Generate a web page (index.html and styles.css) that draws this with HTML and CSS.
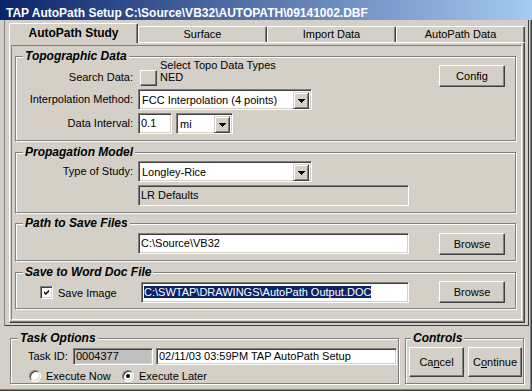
FILE: index.html
```html
<!DOCTYPE html>
<html>
<head>
<meta charset="utf-8">
<link rel="stylesheet" href="styles.css">
</head>
<body>
<div class="window">
  <div class="titlebar">TAP AutoPath Setup C:\Source\VB32\AUTOPATH\09141002.DBF</div>
  <div class="client">
    <div class="frame">
      <div class="tabs">
        <div class="tab active">AutoPath Study</div>
        <div class="tab">Surface</div>
        <div class="tab">Import Data</div>
        <div class="tab">AutoPath Data</div>
      </div>
      <div class="panel">
        <div class="inner">
          <div class="group g1">
            <span class="legend">Topographic Data</span>
            <div class="row row-search">
              <span class="lbl lbl-search">Search Data:</span>
              <span class="sqbtn"></span>
              <div class="topo"><span class="topo-title">Select Topo Data Types</span><span class="topo-ned">NED</span></div>
              <div class="btn btn-side btn-config">Config</div>
            </div>
            <div class="row row-next">
              <span class="lbl">Interpolation Method:</span>
              <div class="combo w-interp"><span class="val">FCC Interpolation (4 points)</span><span class="drop"><svg width="7" height="4" viewBox="0 0 7 4"><path d="M0 0h7v1h-1v1h-1v1h-1v1h-1v-1h-1v-1h-1v-1h-1z"/></svg></span></div>
            </div>
            <div class="row row-next">
              <span class="lbl">Data Interval:</span>
              <div class="edit w-interval">0.1</div>
              <div class="combo w-unit"><span class="val">mi</span><span class="drop"><svg width="7" height="4" viewBox="0 0 7 4"><path d="M0 0h7v1h-1v1h-1v1h-1v1h-1v-1h-1v-1h-1v-1h-1z"/></svg></span></div>
            </div>
          </div>

          <div class="group g2">
            <span class="legend">Propagation Model</span>
            <div class="row">
              <span class="lbl">Type of Study:</span>
              <div class="combo w-interp"><span class="val">Longley-Rice</span><span class="drop"><svg width="7" height="4" viewBox="0 0 7 4"><path d="M0 0h7v1h-1v1h-1v1h-1v1h-1v-1h-1v-1h-1v-1h-1z"/></svg></span></div>
            </div>
            <div class="edit readonly w-path lr">LR Defaults</div>
          </div>

          <div class="group g3">
            <span class="legend">Path to Save Files</span>
            <div class="row">
              <div class="edit w-path indent">C:\Source\VB32</div>
              <div class="btn btn-side btn-browse">Browse</div>
            </div>
          </div>

          <div class="group g4">
            <span class="legend">Save to Word Doc File</span>
            <div class="row">
              <div class="checkwrap">
                <span class="checkbox"><svg width="7" height="7" viewBox="0 0 7 7"><path d="M6 0h1v1h-1zM5 1h2v1h-2zM0 2h1v1h-1zM4 2h3v1h-3zM0 3h2v1h-2zM3 3h3v1h-3zM0 4h5v1h-5zM1 5h3v1h-3zM2 6h1v1h-1z"/></svg></span>
                <span class="checklabel">Save Image</span>
              </div>
              <div class="edit w-doc"><span class="sel">C:\SWTAP\DRAWINGS\AutoPath Output.DOC</span></div>
              <div class="btn btn-side btn-browse2">Browse</div>
            </div>
          </div>
        </div>
      </div>
    </div>

    <div class="bottom">
      <div class="group g-task">
        <span class="legend">Task Options</span>
        <div class="row">
          <span class="tasklbl">Task ID:</span>
          <div class="edit field readonly-id w-taskid">0004377</div>
          <div class="edit field w-taskname">02/11/03 03:59PM TAP AutoPath Setup</div>
        </div>
        <div class="row radios">
          <span class="opt opt-now"><span class="radio"></span>Execute Now</span>
          <span class="opt"><span class="radio on"></span>Execute Later</span>
        </div>
      </div>
      <div class="group g-controls">
        <span class="legend legend-controls">Controls</span>
        <div class="row">
          <div class="btn big btn-cancel">Ca<u>n</u>cel</div>
          <div class="btn big btn-continue">C<u>o</u>ntinue</div>
        </div>
      </div>
    </div>
  </div>
</div>
</body>
</html>
```

FILE: styles.css
```css
* { box-sizing: border-box; }
html, body { margin: 0; padding: 0; }
body {
  background: #d4d0c8;
  font-family: "Liberation Sans", Arial, sans-serif;
  font-size: 11px;
  color: #000;
}
.window { width: 532px; height: 391px; overflow: hidden; }

.titlebar {
  height: 20px;
  padding: 6px 0 0 6px;
  line-height: 14px;
  background: linear-gradient(to right, #0a246a, #a6caf0);
  color: #fff;
  font-weight: bold;
  font-size: 12px;
  white-space: nowrap;
}

.client {
  height: 371px;
  border-right: 1px solid #404040;
  border-bottom: 1px solid #404040;
  box-shadow: inset -1px -1px 0 #808080;
}

.frame {
  margin: 0 2px 0 4px;
  height: 306px;
  padding: 3px 0 0 4px;
  border-left: 1px solid #808080;
  border-right: 1px solid #404040;
  border-bottom: 1px solid #404040;
}

.tabs {
  display: flex;
  align-items: flex-end;
  height: 19px;
  width: 516px;
}
.tab {
  width: 129px;
  height: 16px;
  border-top: 1px solid #fff;
  border-left: 1px solid #fff;
  border-right: 1px solid #404040;
  border-radius: 2px 2px 0 0;
  box-shadow: inset -1px 0 0 #808080;
  text-align: center;
  line-height: 15px;
  background: #d4d0c8;
}
.tab.active {
  position: relative;
  z-index: 1;
  height: 20px;
  margin-bottom: -1px;
  font-weight: bold;
  font-size: 12px;
  line-height: 18px;
}

.panel {
  width: 516px;
  height: 281px;
  padding: 2px 2px 2px 1px;
  border-top: 1px solid #fff;
  border-left: 1px solid #fff;
  border-right: 1px solid #404040;
  border-bottom: 1px solid #404040;
  box-shadow: inset -1px -1px 0 #808080;
}
.inner {
  height: 100%;
  padding: 0 0 0 3px;
  border: 1px solid;
  border-color: #808080 #fff #fff #808080;
  overflow: hidden;
}

.group {
  position: relative;
  border: 1px solid #808080;
  box-shadow: 1px 1px 0 #fff, inset 1px 1px 0 #fff;
}
.inner .group { width: 501px; }
.legend {
  position: absolute;
  top: -8px;
  left: 7px;
  padding: 0 2px;
  background: #d4d0c8;
  font-weight: bold;
  font-style: italic;
  font-size: 12px;
  line-height: 14px;
  white-space: nowrap;
}
.legend-controls { left: 5px; }

.g1 { height: 85px; margin-top: 10px; padding-top: 2px; }
.g2 { height: 61px; margin-top: 11px; padding-top: 8px; }
.g3 { height: 38px; margin-top: 10px; padding-top: 9px; }
.g4 { height: 37px; margin-top: 11px; padding-top: 9px; }

.row { display: flex; align-items: flex-start; }
.row-search { height: 27px; }
.row-next { margin-top: 3px; }

.lbl {
  flex: none;
  width: 117px;
  margin-right: 5px;
  text-align: right;
  line-height: 21px;
  white-space: nowrap;
}
.lbl-search { line-height: 13px; margin-top: 12px; margin-right: 7px; }

.sqbtn {
  flex: none;
  width: 17px;
  height: 16px;
  margin-top: 11px;
  border: 1px solid;
  border-color: #fff #404040 #404040 #fff;
  box-shadow: inset -1px -1px 0 #808080;
}
.topo { display: flex; flex-direction: column; margin-left: 3px; white-space: nowrap; }
.topo-title { line-height: 12px; }
.topo-ned { line-height: 13px; }

.btn {
  flex: none;
  display: flex;
  align-items: center;
  justify-content: center;
  border: 1px solid;
  border-color: #fff #404040 #404040 #fff;
  box-shadow: inset -1px -1px 0 #808080;
  white-space: nowrap;
}
.btn-side { width: 66px; height: 22px; margin-left: auto; margin-right: 10px; }
.btn-config { margin-top: 6px; }
.btn-browse2 { margin-top: -1px; }

.edit, .combo {
  flex: none;
  height: 21px;
  border: 1px solid;
  border-color: #808080 #fff #fff #808080;
  box-shadow: inset 1px 1px 0 #404040, inset -1px -1px 0 #d4d0c8;
  background: #fff;
  white-space: nowrap;
  overflow: hidden;
}
.edit { padding: 0 2px 0 2px; line-height: 19px; }
.combo { display: flex; padding: 2px; }
.combo .val { flex: 1; padding-left: 1px; line-height: 16px; overflow: hidden; }
.drop {
  flex: none;
  width: 16px;
  height: 17px;
  display: flex;
  align-items: center;
  justify-content: center;
  background: #d4d0c8;
  border: 1px solid;
  border-color: #d4d0c8 #404040 #404040 #d4d0c8;
  box-shadow: inset 1px 1px 0 #fff, inset -1px -1px 0 #808080;
}
.drop svg { display: block; fill: #000; }

.w-interp { width: 174px; }
.w-interval { width: 34px; }
.w-unit { width: 57px; margin-left: 4px; }
.w-path { width: 271px; }
.indent, .lr { margin-left: 122px; }
.lr { margin-top: 3px; }
.readonly { background: #d4d0c8; }

.checkwrap { flex: none; width: 125px; display: flex; align-items: center; height: 21px; padding-left: 24px; }
.checkbox {
  flex: none;
  width: 13px;
  height: 13px;
  padding: 3px;
  border: 1px solid;
  border-color: #808080 #fff #fff #808080;
  box-shadow: inset 1px 1px 0 #404040, inset -1px -1px 0 #d4d0c8;
  background: #fff;
  display: flex;
  align-items: center;
  justify-content: center;
}
.checkbox svg { display: block; fill: #000; }
.checklabel { margin-left: 5px; white-space: nowrap; }
.w-doc { width: 268px; padding-left: 2px; }
.sel { background: #0a246a; color: #fff; }

.bottom { display: flex; padding: 12px 0 0 10px; }
.g-task { width: 389px; height: 46px; padding-top: 9px; }
.g-controls { width: 119px; height: 46px; margin-left: 6px; padding-top: 8px; }

.tasklbl { flex: none; width: 45px; margin-left: 17px; line-height: 17px; white-space: nowrap; }
.field { height: 17px; line-height: 15px; }
.readonly-id { background: #c0c0c0; }
.w-taskid { width: 80px; }
.w-taskname { width: 241px; margin-left: 3px; }

.radios { margin-top: 5px; padding-left: 18px; }
.opt { display: flex; align-items: center; height: 12px; white-space: nowrap; }
.opt-now { width: 93px; }
.radio {
  flex: none;
  position: relative;
  width: 12px;
  height: 12px;
  margin-right: 5px;
  border-radius: 50%;
  border: 1px solid;
  border-color: #808080 #fff #fff #808080;
  box-shadow: inset 1px 1px 0 #404040, inset -1px -1px 0 #d4d0c8;
  background: #fff;
}
.radio.on::after {
  content: "";
  position: absolute;
  left: 3px;
  top: 3px;
  width: 4px;
  height: 4px;
  border-radius: 50%;
  background: #000;
}

.big { height: 30px; }
.btn-cancel { width: 55px; margin-left: 3px; }
.btn-continue { width: 54px; margin-left: 4px; }
```
